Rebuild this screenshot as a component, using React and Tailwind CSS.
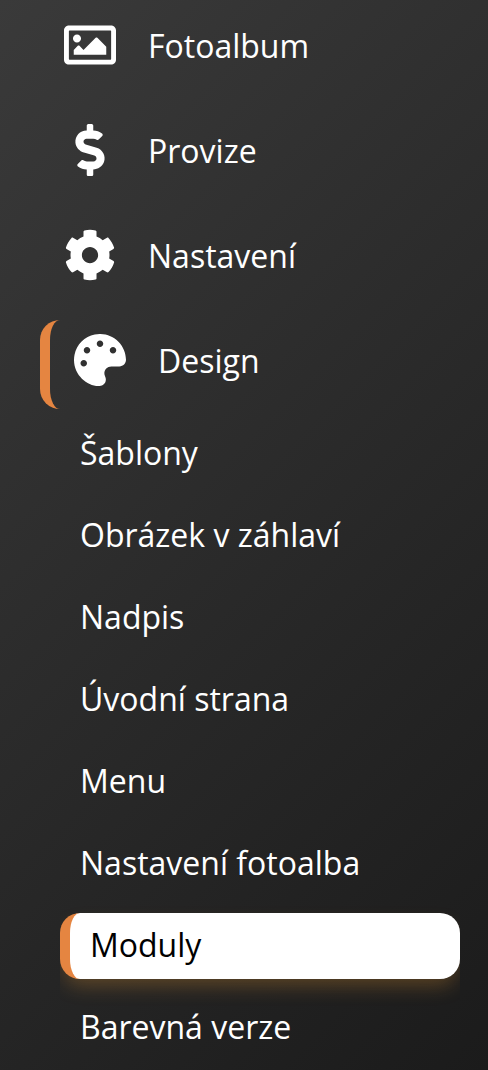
import { FaRegImage, FaDollarSign, FaCog, FaPalette } from "react-icons/fa";

const items = [
  { label: "Fotoalbum", icon: FaRegImage },
  { label: "Provize", icon: FaDollarSign },
  { label: "Nastavení", icon: FaCog },
  { label: "Design", icon: FaPalette, open: true },
];

const designItems = [
  { label: "Šablony" },
  { label: "Obrázek v záhlaví" },
  { label: "Nadpis" },
  { label: "Úvodní strana" },
  { label: "Menu" },
  { label: "Nastavení fotoalba" },
  { label: "Moduly", active: true },
  { label: "Barevná verze" },
];

function NavItem({ label, icon: Icon, open }) {
  return (
    <a
      href="#"
      className={`flex h-[89px] items-center gap-8 rounded-[20px] px-6 pb-[10px] ${open ? "border-l-10 border-[#e58541]" : ""}`}
    >
      <Icon size={52} className="w-[52px] shrink-0" />
      <span className="pt-[2px]">{label}</span>
    </a>
  );
}

function SubItem({ label, active }) {
  return (
    <a
      href="#"
      aria-current={active ? "page" : undefined}
      className={`flex h-[66px] items-center rounded-[20px] px-5 pb-[2px] ${
        active ? "border-l-10 border-[#e58541] bg-white text-black shadow-[0_10px_20px_-4px_rgba(255,165,50,0.28)]" : ""
      }`}
    >
      {label}
    </a>
  );
}

export default function App() {
  return (
    <div className="min-h-screen bg-linear-135 from-[#3a3a3a] to-[#1b1b1b]">
      <nav className="pt-[5px] pr-7 pb-2 pl-10 font-['Open_Sans',sans-serif] text-[32px] leading-12 text-white">
        <ul className="flex flex-col gap-4">
          {items.map((item) => (
            <li key={item.label}>
              <NavItem {...item} />
            </li>
          ))}
        </ul>

        {/* Design submenu */}
        <ul className="mt-3 ml-5 flex flex-col gap-4 overflow-x-clip">
          {designItems.map((item) => (
            <li key={item.label}>
              <SubItem {...item} />
            </li>
          ))}
        </ul>
      </nav>
    </div>
  );
}
